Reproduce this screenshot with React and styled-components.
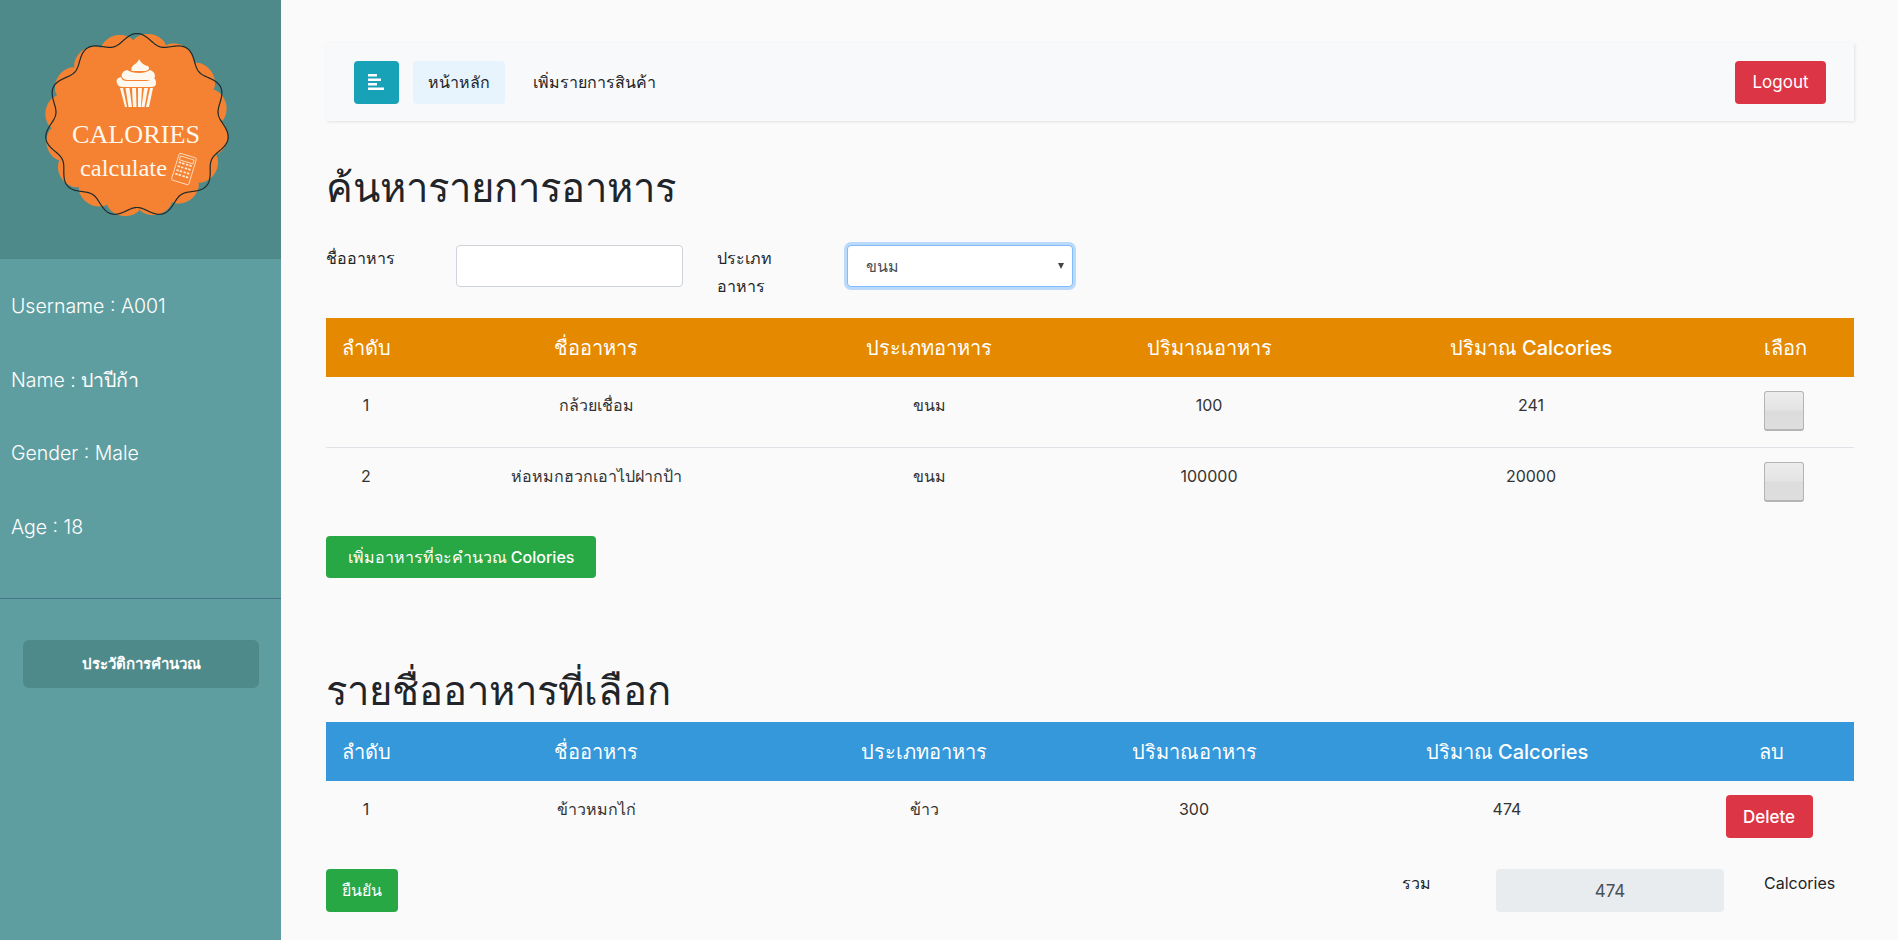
import React from 'react'
import styled, { createGlobalStyle } from 'styled-components'

const GlobalStyle = createGlobalStyle`
  html, body {
    margin: 0;
    padding: 0;
    background: #fff;
    height: 100%;
    overflow: hidden;
  }
  * { box-sizing: border-box; }
  body {
    font-family: Inter, "Noto Sans", sans-serif;
    color: #212529;
  }
`

const Page = styled.div`
  display: flex;
  width: 1898px;
  height: 940px;
  overflow: hidden;
`

const Sidebar = styled.aside`
  width: 281px;
  flex: none;
  background: #5f9ea0;
  color: #fff;
  display: flex;
  flex-direction: column;
`

const SidebarHeader = styled.div`
  height: 259px;
  background: #4f8a8b;
`

const LogoSvg = styled.svg`
  display: block;
`

const UserInfo = styled.ul`
  list-style: none;
  margin: 0;
  padding: 32px 0 32px 11px;
  border-bottom: 1px solid #47748b;
  height: 340px;
  display: flex;
  flex-direction: column;
  gap: 43.5px;
`

const UserItem = styled.li`
  font-size: 19.5px;
  font-weight: 300;
  line-height: 30px;
`

const HistoryButton = styled.button`
  margin: 41px 22px 0 23px;
  height: 48px;
  border: 0;
  border-radius: 6px;
  background: #4f8a8b;
  color: #fff;
  font: inherit;
  font-size: 15px;
  font-weight: 600;
`

const Main = styled.main`
  flex: 1;
  min-width: 0;
  background: #fafafa;
  padding: 43px 44px 0 45px;
`

const Navbar = styled.nav`
  height: 78px;
  background: #f8f9fa;
  padding: 18px 28px;
  display: flex;
  align-items: center;
  box-shadow: 1px 1px 3px rgba(0, 0, 0, 0.1);
`

const ToggleButton = styled.button`
  width: 45px;
  height: 43px;
  padding: 0;
  border: 0;
  border-radius: 4px;
  background: #17a2b8;
  display: flex;
  align-items: center;
  justify-content: center;
  margin-right: 14px;
`

const NavLink = styled.a`
  height: 43px;
  padding: 0 15px;
  display: flex;
  align-items: center;
  border-radius: 4px;
  font-size: 16px;
  color: #212529;
  background: ${p => (p.$active ? '#e7f3fd' : 'transparent')};
  margin-right: 13px;
`

const LogoutButton = styled.button`
  margin-left: auto;
  width: 91px;
  height: 43px;
  border: 0;
  border-radius: 4px;
  background: #dc3545;
  color: #fff;
  font: inherit;
  font-size: 17px;
`

const Heading = styled.h1`
  margin: ${p => p.$top}px 0 ${p => p.$bottom}px;
  font-size: 40px;
  line-height: 48px;
  font-weight: 400;
  color: #212529;
`

const SearchRow = styled.div`
  display: flex;
  align-items: flex-start;
  height: 73px;
`

const FieldLabel = styled.label`
  width: ${p => p.$width}px;
  flex: none;
  padding-right: ${p => p.$gap}px;
  margin-top: -1px;
  font-size: 16px;
  line-height: 28px;
`

const TextInput = styled.input`
  width: 227px;
  height: 42px;
  margin-right: 34px;
  border: 1px solid #ced4da;
  border-radius: 4px;
  background: #fff;
`

const SelectWrap = styled.div`
  position: relative;
  width: 226px;
  height: 42px;

  &::after {
    content: '';
    position: absolute;
    right: 9px;
    top: 18px;
    border-left: 3.5px solid transparent;
    border-right: 3.5px solid transparent;
    border-top: 6px solid #444;
  }
`

const Select = styled.select`
  appearance: none;
  width: 100%;
  height: 100%;
  padding: 0 18px;
  border: 1px solid #80bdff;
  border-radius: 4px;
  background: #fff;
  box-shadow: 0 0 0 3px rgba(0, 123, 255, 0.25);
  font: inherit;
  font-size: 16px;
  color: #495057;
`

const Table = styled.table`
  width: 100%;
  table-layout: fixed;
  border-collapse: collapse;
`

const HeadRow = styled.tr`
  background: ${p => p.$color};
  height: 59px;
`

const Th = styled.th`
  padding: 0;
  color: #fff;
  font-size: 20px;
  font-weight: 500;
  text-align: center;
`

const Row = styled.tr`
  border-top: ${p => (p.$divider ? '1px solid #dee2e6' : '0')};
`

const Td = styled.td`
  padding: 14px 0 ${p => p.$bottom || 14}px;
  font-size: 16px;
  line-height: 28px;
  text-align: center;
  vertical-align: top;
  color: #333;
`

const Tick = styled.input`
  appearance: none;
  display: block;
  margin: 0 auto;
  width: 40px;
  height: 40px;
  border: 1px solid #b4b4b4;
  border-bottom-width: 2px;
  border-radius: 3px;
  background: linear-gradient(#ececec, #e4e4e4 48%, #dcdcdc 52%, #dedede);
  transform: translateX(-1px);
`

const GreenButton = styled.button`
  display: block;
  width: ${p => p.$width}px;
  height: ${p => p.$height}px;
  margin-top: ${p => p.$top || 0}px;
  padding: 0;
  border: 0;
  border-radius: 4px;
  background: #28a745;
  color: #fff;
  font: inherit;
  font-size: 16px;
  font-weight: 500;
`

const DeleteButton = styled.button`
  display: block;
  margin: 0 auto;
  width: 87px;
  height: 43px;
  border: 0;
  border-radius: 4px;
  background: #dc3545;
  color: #fff;
  font: inherit;
  font-size: 17px;
  font-weight: 500;
  transform: translateX(-2px);
`

const Footer = styled.div`
  display: flex;
  align-items: flex-start;
  margin-top: 17px;
`

const TotalLabel = styled.span`
  margin-left: ${p => p.$left};
  width: ${p => p.$width}px;
  flex: none;
  font-size: 16px;
  line-height: 28px;
  color: #212529;
`

const TotalInput = styled.input`
  width: 228px;
  height: 43px;
  flex: none;
  border: 0;
  border-radius: 4px;
  background: #e9ecef;
  color: #495057;
  text-align: center;
  font: inherit;
  font-size: 17px;
  margin-right: 40px;
`

const foodCols = [80, 380, 286, 274, 370, 138]
const selectedCols = [80, 380, 276, 264, 362, 166]

const foods = [
  { id: 1, name: 'กล้วยเชื่อม', type: 'ขนม', amount: '100', cal: '241' },
  { id: 2, name: 'ห่อหมกฮวกเอาไปฝากป้า', type: 'ขนม', amount: '100000', cal: '20000' },
]

const polar = (fn, cx, cy) => {
  const pts = []
  for (let i = 0; i < 720; i++) {
    const a = (i / 720) * Math.PI * 2
    const r = fn(a)
    pts.push(`${(cx + r * Math.cos(a)).toFixed(2)} ${(cy + r * Math.sin(a)).toFixed(2)}`)
  }
  return 'M' + pts.join('L') + 'Z'
}

const scallop = polar(a => 84 + 8 * Math.pow(Math.abs(Math.sin(8 * a + 0.3)), 0.6), 136.5, 125)
const wave = polar(a => 87 + 5 * Math.cos(11 * (a + Math.PI / 2)), 137, 125.5)

const Logo = () => (
  <LogoSvg width="281" height="259" viewBox="0 0 281 259">
    <path d={scallop} fill="#f48232" />
    <path d={wave} fill="none" stroke="#1b2a2c" strokeWidth="1.2" />
    {/* cupcake */}
    <g fill="#fff8ee">
      <path d="M139 59c-1 4-5 5-7 8-1 2-1 3 0 4h14c3-1 4-3 2-5-3 0-7-3-9-7z" />
      <path d="M127 70c-4 1-6 4-5 7 1 2 3 3 6 3h21c4 0 6-2 6-4 0-3-2-5-5-6-3 2-6 3-11 3s-9-1-12-3z" />
      <path d="M121 77c-4 1-5 3-4 6 1 3 3 4 6 4h28c3 0 5-1 5-4 0-3-1-5-4-6-1 3-3 4-7 4h-18c-3 0-5-1-6-4z" />
      <path d="M120 88h3l4 19h-2z" />
      <path d="M125.500 88h4l2.500 19h-3.500z" />
      <path d="M132 88h4l.5 19h-3.500z" />
      <path d="M138 88h4l-1 19h-3z" />
      <path d="M144 88h4l-3.500 19h-3z" />
      <path d="M150 88h3l-4 19h-3z" />
    </g>
    <LogoText x="72" y="143" textLength="128" lengthAdjust="spacingAndGlyphs" $size={26}>CALORIES</LogoText>
    <LogoText x="80" y="176" textLength="87" lengthAdjust="spacingAndGlyphs" $size={24}>calculate</LogoText>
    {/* calculator */}
    <g transform="rotate(17 184 169)" fill="none" stroke="#ffe6cc" strokeWidth="0.8">
      <rect x="175" y="155" width="18" height="28" rx="1.5" />
      <rect x="177" y="157.500" width="14" height="4" />
      {[164, 168, 172, 176].map(y => (
        <path key={y} d={`M177 ${y}h2.500M180.500 ${y}h2.500M184.500 ${y}h2.500M188 ${y}h2.500`} strokeWidth="1.8" />
      ))}
    </g>
  </LogoSvg>
)

const LogoText = styled.text`
  font-family: "Liberation Serif", serif;
  font-size: ${p => p.$size}px;
  fill: #fff8ee;
`

const HeadCells = ({ labels }) => (
  <HeadRow $color={labels.color}>
    {labels.items.map(l => <Th key={l}>{l}</Th>)}
  </HeadRow>
)

const Cols = ({ widths }) => (
  <colgroup>
    {widths.map((w, i) => <col key={i} width={w} />)}
  </colgroup>
)

export default function App() {
  return (
    <Page>
      <GlobalStyle />
      <Sidebar>
        <SidebarHeader><Logo /></SidebarHeader>
        <UserInfo>
          <UserItem>Username : A001</UserItem>
          <UserItem>Name : <b>ปาปีก้า</b></UserItem>
          <UserItem>Gender : Male</UserItem>
          <UserItem>Age : 18</UserItem>
        </UserInfo>
        <HistoryButton>ประวัติการคำนวณ</HistoryButton>
      </Sidebar>
      <Main>
        <Navbar>
          <ToggleButton>
            <svg width="17" height="16" viewBox="0 0 17 16" fill="#fff">
              <rect x="0" y="0" width="9" height="2.500" />
              <rect x="0" y="4.500" width="13" height="2.500" />
              <rect x="0" y="9" width="9" height="2.500" />
              <rect x="0" y="13.500" width="16" height="2.500" />
            </svg>
          </ToggleButton>
          <NavLink $active>หน้าหลัก</NavLink>
          <NavLink>เพิ่มรายการสินค้า</NavLink>
          <LogoutButton>Logout</LogoutButton>
        </Navbar>

        <Heading $top={43} $bottom={33}>ค้นหารายการอาหาร</Heading>
        <SearchRow>
          <FieldLabel $width={130} $gap={20}>ชื่ออาหาร</FieldLabel>
          <TextInput />
          <FieldLabel $width={130} $gap={50}>ประเภทอาหาร</FieldLabel>
          <SelectWrap>
            <Select defaultValue="ขนม">
              <option>ขนม</option>
            </Select>
          </SelectWrap>
        </SearchRow>

        <Table>
          <Cols widths={foodCols} />
          <thead>
            <HeadCells labels={{ color: '#e58a00', items: ['ลำดับ', 'ชื่ออาหาร', 'ประเภทอาหาร', 'ปริมาณอาหาร', 'ปริมาณ Calcories', 'เลือก'] }} />
          </thead>
          <tbody>
            {foods.map((f, i) => (
              <Row key={f.id} $divider={i > 0}>
                <Td>{f.id}</Td>
                <Td>{f.name}</Td>
                <Td>{f.type}</Td>
                <Td>{f.amount}</Td>
                <Td>{f.cal}</Td>
                <Td $bottom={16}><Tick type="checkbox" /></Td>
              </Row>
            ))}
          </tbody>
        </Table>
        <GreenButton $width={270} $height={42} $top={18}>เพิ่มอาหารที่จะคำนวณ Colories</GreenButton>

        <Heading $top={89} $bottom={7}>รายชื่ออาหารที่เลือก</Heading>
        <Table>
          <Cols widths={selectedCols} />
          <thead>
            <HeadCells labels={{ color: '#3498db', items: ['ลำดับ', 'ชื่ออาหาร', 'ประเภทอาหาร', 'ปริมาณอาหาร', 'ปริมาณ Calcories', 'ลบ'] }} />
          </thead>
          <tbody>
            <Row>
              <Td>1</Td>
              <Td>ข้าวหมกไก่</Td>
              <Td>ข้าว</Td>
              <Td>300</Td>
              <Td>474</Td>
              <Td><DeleteButton>Delete</DeleteButton></Td>
            </Row>
          </tbody>
        </Table>
        <Footer>
          <GreenButton $width={72} $height={43}>ยืนยัน</GreenButton>
          <TotalLabel $left="auto" $width={94}>รวม</TotalLabel>
          <TotalInput disabled value="474" readOnly />
          <TotalLabel $left="0" $width={90}>Calcories</TotalLabel>
        </Footer>
      </Main>
    </Page>
  )
}
